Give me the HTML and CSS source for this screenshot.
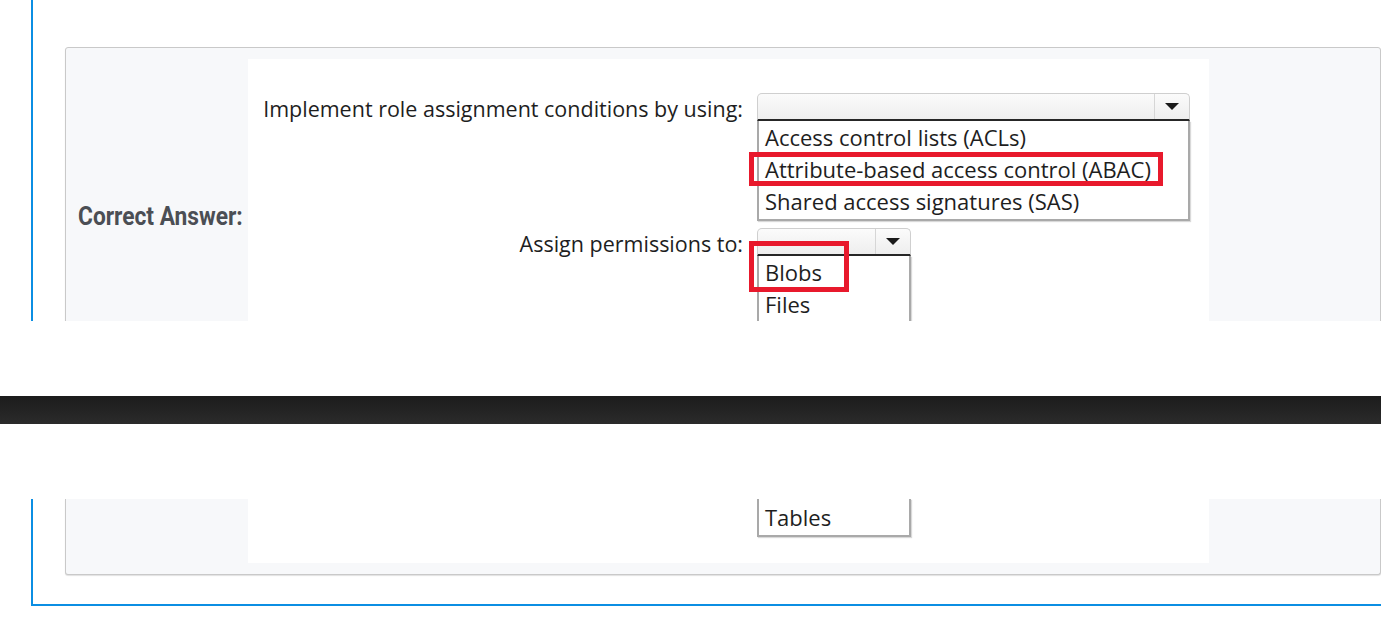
FILE: index.html
```html
<!DOCTYPE html>
<html lang="en">
<head>
<meta charset="utf-8">
<title>Correct Answer</title>
<link rel="stylesheet" href="styles.css">
</head>
<body>
<div class="frame frame-top">
  <section class="question">
    <div class="card">
      <div class="label"><span class="label-text">Correct Answer:</span></div>
      <div class="answer answer-top">
        <div class="answer-grid">
          <div class="prompt">Implement role assignment conditions by using:</div>
          <div class="dd dd-wide">
            <div class="dd-head"><span class="dd-btn"><span class="tri"></span></span></div>
            <ul class="dd-list">
              <li>Access control lists (ACLs)</li>
              <li class="picked picked-abac">Attribute-based access control (ABAC)</li>
              <li>Shared access signatures (SAS)</li>
            </ul>
          </div>
          <div class="prompt">Assign permissions to:</div>
          <div class="dd dd-narrow">
            <div class="dd-head"><span class="dd-btn"><span class="tri"></span></span></div>
            <ul class="dd-list dd-list-open">
              <li class="picked picked-blobs">Blobs</li>
              <li>Files</li>
            </ul>
          </div>
        </div>
      </div>
    </div>
  </section>
</div>
<div class="gap"></div>
<header class="darkbar"></header>
<div class="gap"></div>
<div class="frame frame-bottom">
  <section class="question question-end">
    <div class="card card-end">
      <div class="label"></div>
      <div class="answer answer-bottom">
        <div class="answer-grid">
          <div class="prompt"></div>
          <div class="dd dd-narrow">
            <ul class="dd-list dd-list-end">
              <li>Tables</li>
            </ul>
          </div>
        </div>
      </div>
    </div>
  </section>
</div>
</body>
</html>
```
FILE: styles.css
```css
*, *::before, *::after { box-sizing: border-box; }
html, body {
  margin: 0;
  padding: 0;
  background: #ffffff;
  overflow: hidden;
}
body {
  width: 1381px;
  height: 627px;
  font-family: "Open Sans", "Noto Sans", sans-serif;
}

.frame { overflow: hidden; }
.frame-top { height: 321px; }
.frame-bottom { height: 128px; }

.gap { height: 75px; }
.darkbar {
  height: 28px;
  background: linear-gradient(#1c1c1c, #2b2b2b);
}

.question {
  margin-left: 31px;
  border-left: 2px solid #0b8ee3;
  padding: 47px 0 0 32px;
}
.question-end {
  padding-top: 0;
  padding-bottom: 29px;
  border-bottom: 2px solid #0b8ee3;
}

.card {
  display: flex;
  background: #f7f8fa;
  border: 1px solid #c9c9c9;
  border-radius: 3px;
  box-shadow: 0 1px 1px rgba(0,0,0,0.12);
  padding: 11px 0;
}
.card-end {
  border-top: none;
  border-radius: 0 0 3px 3px;
  padding-top: 0;
}

.label {
  width: 182px;
  flex: none;
  align-self: center;
  padding-left: 12px;
  white-space: nowrap;
}
.label-text {
  display: inline-block;
  font-family: "Roboto", "Liberation Sans", sans-serif;
  font-weight: 700;
  font-size: 26px;
  line-height: 30px;
  color: #4b4e54;
  transform: scaleX(0.875);
  transform-origin: left center;
}

.answer {
  width: 961px;
  flex: none;
  background: #ffffff;
  color: #1e1e1e;
}
.answer-top {
  height: 314px;
  padding-top: 34px;
}
.answer-bottom {
  height: 64px;
}

.answer-grid {
  display: grid;
  grid-template-columns: 495px auto;
  column-gap: 14px;
  row-gap: 7px;
  align-items: start;
  font-size: 22px;
}

.prompt {
  text-align: right;
  font-size: 21.5px;
  line-height: 26px;
  padding-top: 3px;
  white-space: nowrap;
}

.dd { justify-self: start; }
.dd-wide { width: 433px; }
.dd-narrow { width: 154px; }

.dd-head {
  height: 28px;
  display: flex;
  justify-content: flex-end;
  border: 1px solid #cfcfcf;
  border-bottom: 2px solid #262626;
  border-radius: 5px 5px 0 0;
  background: linear-gradient(#fbfbfb, #eeeeee);
}
.dd-btn {
  width: 35px;
  border-left: 1px solid #d6d6d6;
  display: flex;
  align-items: center;
  justify-content: center;
}
.tri {
  width: 0;
  height: 0;
  border-left: 7px solid transparent;
  border-right: 7px solid transparent;
  border-top: 7px solid #1a1a1a;
}

.dd-list {
  list-style: none;
  margin: 0;
  padding: 0 6px 2px 6px;
  border: 2px solid #a9a9a9;
  border-top: none;
  background: #ffffff;
  box-shadow: 1px 1px 1px rgba(0,0,0,0.15);
}
.dd-list-open { padding-bottom: 20px; }
.dd-list li {
  line-height: 32px;
  white-space: nowrap;
  position: relative;
}
.dd-list-end li { padding-top: 2px; }

.picked::after {
  content: "";
  position: absolute;
  border: 5px solid #e8192c;
}
.picked-abac::after {
  left: -16px;
  top: -1px;
  width: 414px;
  height: 34px;
}
.picked-blobs::after {
  left: -16px;
  top: -15px;
  width: 100px;
  height: 51px;
}
```
